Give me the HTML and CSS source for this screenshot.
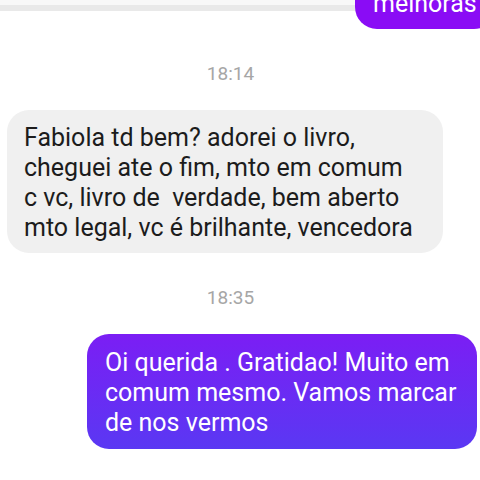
FILE: index.html
```html
<!DOCTYPE html>
<html>
  <head>
    <title>Chat</title>
    <link rel="stylesheet" href="styles.css">
  </head>
  <body>
    <div class="chat">
      <div class="row sent-row">
        <div class="bubble sent top-bubble">melhoras</div>
      </div>

      <div class="time">18:14</div>

      <div class="row">
        <div class="bubble received">
          Fabiola td bem? adorei o livro,<br />
          cheguei ate o fim, mto em comum<br />
          c vc, livro de&nbsp; verdade, bem aberto<br />
          mto legal, vc é brilhante, vencedora
        </div>
      </div>

      <div class="time">18:35</div>

      <div class="row sent-row">
        <div class="bubble sent reply">
          Oi querida . Gratidao! Muito em<br />
          comum mesmo. Vamos marcar<br />
          de nos vermos
        </div>
      </div>
    </div>
  </body>
</html>
```

FILE: styles.css
```css
body {
  margin: 0;
  padding: 0;
  overflow: hidden;
  font-family: Roboto, "Liberation Sans", sans-serif;
  background: #fff;
  background-image: linear-gradient(#f8f8f8 0 5px, #e9e9e9 5px 11px, #fff 11px);
  background-repeat: no-repeat;
  background-size: 100% 11px;
}

.chat {
  display: flex;
  flex-direction: column;
}

.row {
  display: flex;
}

.sent-row {
  justify-content: flex-end;
}

.bubble {
  font-size: 25px;
  line-height: 30px;
  border-radius: 22px;
}

.received {
  margin-left: 7px;
  width: 436px;
  box-sizing: border-box;
  padding: 13px 17px 10px;
  background-color: #f0f0f0;
  color: #1c1c1c;
}

.sent {
  color: #fff;
  background: linear-gradient(#7b1ef4, #5a38f3);
}

.top-bubble {
  margin-top: -25px;
  margin-right: -16px;
  width: 141px;
  box-sizing: border-box;
  padding: 14px 18px 10px;
  background: #8a0cf5;
}

.reply {
  margin-right: 3px;
  width: 390px;
  box-sizing: border-box;
  padding: 14px 18px 11px;
}

.time {
  margin: 34px 0 25px;
  padding-right: 19px;
  text-align: center;
  font-size: 19px;
  line-height: 22px;
  color: #a6a6a6;
}
```
